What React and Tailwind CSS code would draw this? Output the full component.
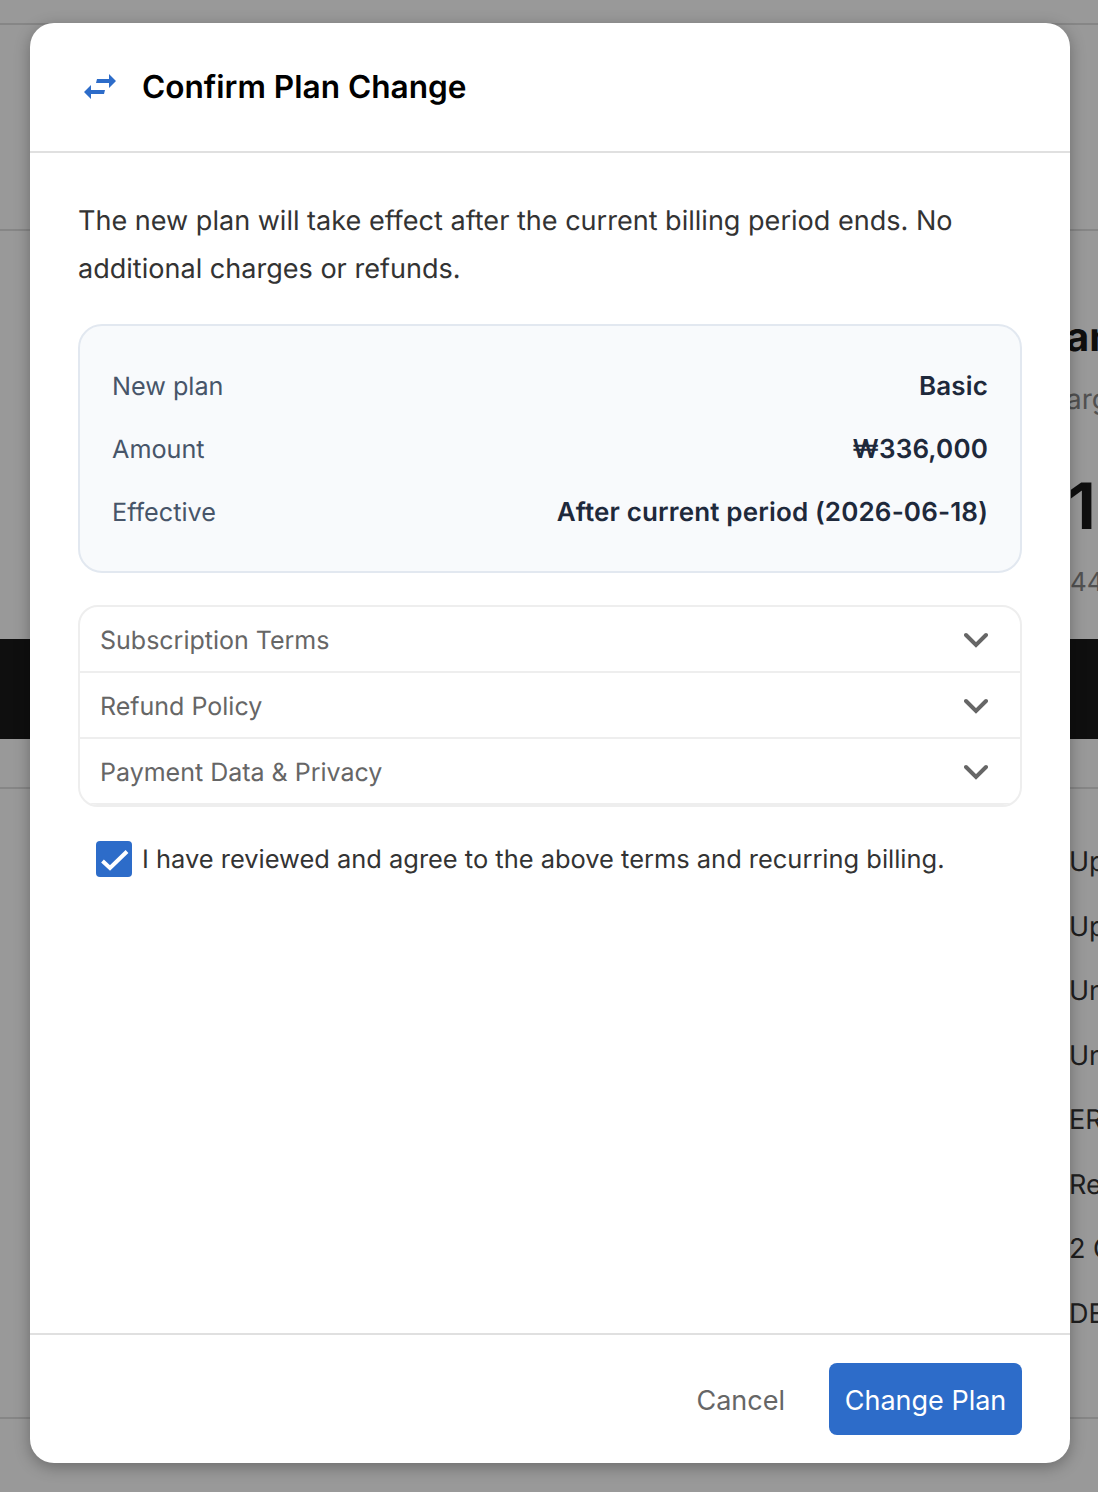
const ROWS = [
  ["New plan", "Basic"],
  ["Amount", "₩336,000"],
  ["Effective", "After current period (2026-06-18)"],
];
const TERMS = ["Subscription Terms", "Refund Policy", "Payment Data & Privacy"];
const BACK = ["Upgrade", "Upgrade", "Unlimited", "Unlimited", "ERP", "Report", "2 GB", "DEMO"];

function Chevron() {
  return (
    <svg width="24" height="16" viewBox="0 0 24 16" className="mt-[2px]" fill="none" stroke="#666666" strokeWidth="4" strokeLinecap="round" strokeLinejoin="miter">
      <path d="M2 3l10 10L22 3" />
    </svg>
  );
}

function Background() {
  return (
    <div className="h-[1492px] overflow-hidden bg-white text-[#333333] whitespace-nowrap">
      <div className="h-[25px] border-b-2 border-[#e0e0e0]" />
      <div className="h-[206px] border-b-2 border-[#e0e0e0]" />
      <div className="h-[408px] pl-[1070px] pt-[82px]">
        <div className="-ml-[4px] h-[48px] text-[40px] leading-[48px] font-bold text-[#1a1a1a]">an</div>
        <div className="-ml-[4px] mt-[18px] h-[40px] text-[28px] leading-[40px] text-[#888888]">arg</div>
        <div className="-ml-[2px] mt-[56px] h-[64px] text-[64px] leading-[64px] font-bold text-[#1a1a1a]">1</div>
        <div className="mt-[26px] text-[26px] leading-[36px] text-[#888888]">44</div>
      </div>
      <div className="h-[100px] bg-[#1a1a1a]" />
      <div className="h-[50px] border-b-2 border-[#e0e0e0]" />
      <div className="flex flex-col gap-[24.5px] pl-[1069px] pt-[53px] text-[27px] leading-[40px]">
        {BACK.map((t, i) => (
          <div key={i}>{t}</div>
        ))}
      </div>
      <div className="mt-[83px] border-b-2 border-[#e0e0e0]" />
    </div>
  );
}

export default function App() {
  return (
    <div className="relative h-[1492px] w-[1098px] overflow-hidden font-['Inter',sans-serif] [text-rendering:geometricPrecision]">
      <Background />
      <div className="absolute inset-0 flex items-start bg-black/40 pt-[23px] pl-[30px]">
        <div className="flex h-[1440px] w-[1040px] flex-col overflow-hidden rounded-[24px] bg-white shadow-[0_4px_16px_rgba(0,0,0,0.3)]">
          <div className="flex h-[130px] shrink-0 items-center gap-[24px] border-b-2 border-[#e0e0e0] px-[48px]">
            <svg width="40" height="40" viewBox="2 1 40 40" className="shrink-0" fill="#2d6cc9">
              <path d="M21 13H33V8l7 7-7 7v-5H20z" />
              <path d="M29 24H15v-5l-7 7 7 7v-5h13z" />
            </svg>
            <h2 className="text-[31.6px] leading-[40px] font-semibold text-black">Confirm Plan Change</h2>
          </div>

          <div className="flex flex-1 flex-col px-[48px] pt-[44px]">
            <p className="text-[27.05px] leading-[48px] text-[#333333]">
              The new plan will take effect after the current billing period ends. No additional charges or refunds.
            </p>

            <div className="mt-[31px] flex flex-col gap-[27px] rounded-[24px] border-2 border-[#e2e8f0] bg-[#f8fafc] px-[32px] pt-[43px] pb-[40px] text-[25.2px] leading-[36px]">
              {ROWS.map(([k, v]) => (
                <div key={k} className="flex items-center justify-between">
                  <span className="text-[#475569]">{k}</span>
                  <span className="text-[26px] font-semibold tracking-[0.15px] text-[#1e293b]">{v}</span>
                </div>
              ))}
            </div>

            <div className="mt-[32px] flex flex-col overflow-hidden rounded-[20px] border-2 border-[#eeeeee]">
              {TERMS.map((t) => (
                <div key={t} className="flex h-[66px] items-center justify-between border-b-2 border-[#eeeeee] pr-[32px] pl-[20px] text-[25px] text-[#666666]">
                  <span className="pt-[5px]">{t}</span>
                  <Chevron />
                </div>
              ))}
            </div>

            <label className="mt-[34px] flex items-start gap-[10px] pl-[18px] text-[25.45px] leading-[38px] text-[#333333]">
              <span className="flex h-[36px] w-[36px] shrink-0 items-center justify-center rounded-[4px] bg-[#2d6cc9]">
                <svg width="36" height="36" viewBox="0 0 36 36" fill="none" stroke="#ffffff" strokeWidth="4">
                  <path d="M6.500 20l7.500 7L31 10.500" />
                </svg>
              </span>
              <span>I have reviewed and agree to the above terms and recurring billing.</span>
            </label>
          </div>

          <div className="flex h-[130px] shrink-0 items-center justify-end gap-[44px] border-t-2 border-[#e0e0e0] px-[48px]">
            <button className="pt-[4px] text-[27px] leading-[40px] text-[#666666]">Cancel</button>
            <button className="flex h-[72px] w-[193px] items-center justify-center rounded-[8px] bg-[#2d6cc9] pt-[4px] text-[27px] text-white">Change Plan</button>
          </div>
        </div>
      </div>
    </div>
  );
}
